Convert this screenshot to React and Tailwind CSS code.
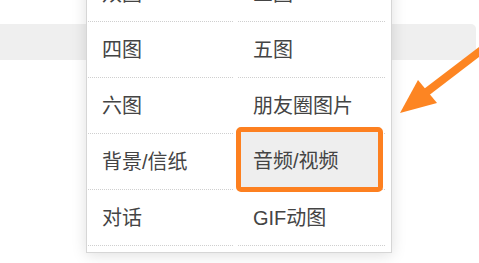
import React from 'react'

const font = { fontFamily: '"Liberation Sans", "Noto Sans CJK SC", sans-serif' }

// menu rows: [left, right]
const rows = [
  ['双图', '三图'],
  ['四图', '五图'],
  ['六图', '朋友圈图片'],
  ['背景/信纸', '音频/视频'],
  ['对话', 'GIF动图'],
]

function Cell({ label, right, active }) {
  return (
    <div
      className={
        'relative h-[56px] flex items-center border-b border-dotted border-[#cfcfcf] text-[20px] text-[#444] ' +
        (right ? 'pl-[15px]' : 'pl-[14px]')
      }
    >
      {active ? (
        <div className="absolute -left-[2px] right-[2px] -top-[7px] -bottom-[3px] z-10 flex items-center pl-[12px] pt-[2px] bg-[#eeeeee] border-[5px] border-[#fd8020] rounded-[5px]">
          {label}
        </div>
      ) : (
        label
      )}
    </div>
  )
}

export default function App() {
  return (
    <div className="relative w-[479px] h-[263px] overflow-hidden bg-white pt-[24px]" style={font}>
      {/* bar behind the menu */}
      <div className="h-[36px] mr-[3px] rounded-r-[5px] bg-[#efefef]" />

      {/* dropdown menu */}
      <div className="absolute left-[86px] top-[-35px] w-[306px] bg-white border border-[#d6d6d6] pb-[6px] shadow-[0_2px_14px_rgba(0,0,0,0.13)]">
        <div className="grid grid-cols-[145px_147px] gap-x-[5px] pl-[1px]">
          {rows.map(([l, r]) => (
            <React.Fragment key={l}>
              <Cell label={l} />
              <Cell label={r} right active={r === '音频/视频'} />
            </React.Fragment>
          ))}
        </div>
      </div>

      {/* annotation arrow */}
      <svg className="absolute inset-0 pointer-events-none" width="479" height="263" viewBox="0 0 479 263">
        <line x1="492" y1="42" x2="424" y2="94" stroke="#fd8522" strokeWidth="8" />
        <polygon points="400,113 418,80 437,103" fill="#fd8522" />
      </svg>
    </div>
  )
}
